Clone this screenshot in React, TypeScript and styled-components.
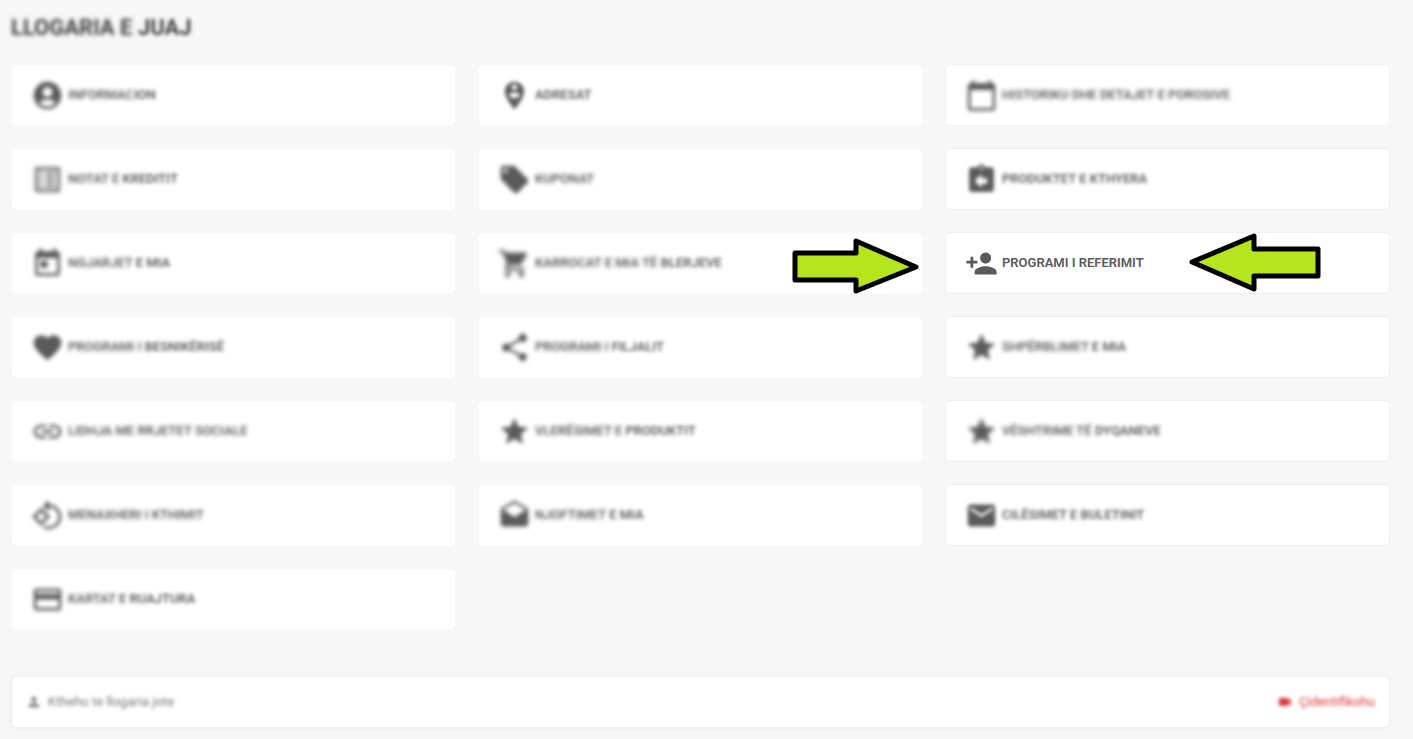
import React from "react";
import styled, { createGlobalStyle } from "styled-components";
import type { IconType } from "react-icons";
import {
  MdAccountCircle,
  MdAssignmentReturn,
  MdCalendarToday,
  MdCreditCard,
  MdDrafts,
  MdEmail,
  MdFavorite,
  MdLink,
  MdListAlt,
  MdLocalOffer,
  MdPerson,
  MdPersonAdd,
  MdPersonPinCircle,
  MdRotate90DegreesCcw,
  MdShare,
  MdShoppingCart,
  MdStar,
  MdToday,
  MdVideocam,
} from "react-icons/md";

const GlobalStyle = createGlobalStyle`
  * { box-sizing: border-box; }
  body {
    margin: 0;
    background: #f7f7f7;
    color: #5a5a5a;
    font-family: Roboto, "Liberation Sans", sans-serif;
  }
`;

type Softness = "none" | "light" | "medium" | "heavy";

const BLUR: Record<Softness, string> = {
  none: "none",
  light: "blur(1px) blur(1px) blur(1px)",
  medium: "blur(2px)",
  heavy: "blur(2px) blur(1px)",
};

const Page = styled.main`
  padding: 12px 23px 12px 11px;
`;

const Title = styled.h1`
  margin: 0 0 20px;
  font-size: 22px;
  line-height: 32px;
  font-weight: 700;
  color: #414141;
`;

const Blur = styled.span<{ $soft: Softness }>`
  filter: ${(p) => BLUR[p.$soft]};
`;

const Grid = styled.nav`
  display: grid;
  grid-template-columns: repeat(3, 1fr);
  gap: 22px;
`;

const Card = styled.a<{ $edge: string }>`
  position: relative;
  display: flex;
  align-items: center;
  gap: 4px;
  height: 62px;
  padding: 0 19px;
  border: 1px solid ${(p) => p.$edge};
  border-radius: 5px;
  background: #fff;
  background-clip: padding-box;
  color: #5a5a5a;
  text-decoration: none;
`;

const IconBox = styled(Blur)`
  display: flex;
  font-size: 33px;
`;

const Label = styled.span`
  font-size: 13px;
  line-height: 20px;
  font-weight: 600;
  white-space: pre;
`;

const ArrowSlot = styled.span<{ $side: "left" | "right" }>`
  position: absolute;
  top: 0;
  ${(p) => (p.$side === "right" ? "right: 2px;" : "left: 242px;")}
  display: flex;
`;

const Footer = styled.footer`
  display: flex;
  align-items: center;
  justify-content: space-between;
  height: 52px;
  margin-top: 46px;
  padding: 0 14px;
  border: 1px solid #efefef;
  border-radius: 5px;
  background: #fff;
  box-shadow: 0 0 3px #e6e6e6;
`;

const FooterLink = styled.a<{ $color: string }>`
  display: flex;
  align-items: center;
  gap: 6px;
  color: ${(p) => p.$color};
  font-size: 13px;
  line-height: 20px;
  text-decoration: none;
  filter: ${BLUR.light};
`;

function Arrow({ side }: { side: "left" | "right" }) {
  const points =
    side === "right"
      ? "3,20 64,20 64,8 124,34 64,58 64,47 3,47"
      : "4,29 66,3 66,16 130,16 130,43 66,43 66,56";
  return (
    <ArrowSlot $side={side}>
      <svg width="134" height="62" viewBox={side === "right" ? "-6 0 134 62" : "0 0 134 62"} aria-hidden="true">
        <polygon points={points} fill="#b5e61d" stroke="#000" strokeWidth="5" strokeLinejoin="round" />
      </svg>
    </ArrowSlot>
  );
}

type Item = {
  icon: IconType;
  faint?: string;
  clear?: string;
  iconSoft?: Softness;
  soft?: Softness;
  edge?: string;
  arrow?: "left" | "right";
};

const EDGE = "#efefef";
const PALE = "#f9f9f9";

const items: Item[] = [
  { icon: MdAccountCircle, faint: "INFORMAC", clear: "ION" },
  { icon: MdPersonPinCircle, clear: "ADRESAT", iconSoft: "light" },
  { icon: MdCalendarToday, faint: "HISTORIKU DHE DETAJET E POROSIVE", edge: "#f3f3f3" },
  { icon: MdListAlt, faint: "NOTAT E ", clear: "KREDITIT", iconSoft: "heavy" },
  { icon: MdLocalOffer, faint: "KUPONAT" },
  { icon: MdAssignmentReturn, clear: "PRODUKTET E KTHYERA", iconSoft: "light", edge: EDGE },
  { icon: MdToday, faint: "NGJARJET ", clear: "E MIA" },
  { icon: MdShoppingCart, faint: "KARROCAT E MIA TË ", clear: "BLERJEVE", iconSoft: "heavy", arrow: "right" },
  { icon: MdPersonAdd, clear: "PROGRAMI I REFERIMIT", iconSoft: "none", soft: "none", edge: EDGE, arrow: "left" },
  { icon: MdFavorite, faint: "PROGRAMI I ", clear: "BESNIKËRISË" },
  { icon: MdShare, faint: "PROGRAMI I ", clear: "FILJALIT" },
  { icon: MdStar, faint: "SHPËRBLIMET ", clear: "E MIA", edge: EDGE },
  { icon: MdLink, faint: "LIDHJA ", clear: "ME RRJETET SOCIALE", soft: "medium" },
  { icon: MdStar, faint: "VLERËSIMET E ", clear: "PRODUKTIT" },
  { icon: MdStar, faint: "VËSHTRIME TË ", clear: "DYQANEVE", iconSoft: "heavy", edge: EDGE },
  { icon: MdRotate90DegreesCcw, clear: "MENAXHERI I KTHIMIT", soft: "medium" },
  { icon: MdDrafts, faint: "NJOFTIMET ", clear: "E MIA" },
  { icon: MdEmail, clear: "CILËSIMET E BULETINIT", iconSoft: "light", edge: EDGE },
  { icon: MdCreditCard, faint: "KARTAT ", clear: "E RUAJTURA" },
];

export default function App() {
  return (
    <>
      <GlobalStyle />
      <Page>
        <Title>
          <Blur $soft="medium">LLOGARIA E </Blur>
          <Blur $soft="light">JUAJ</Blur>
        </Title>
        <Grid aria-label="Llogaria">
          {items.map(({ icon: Icon, faint, clear, iconSoft = "medium", soft = "light", edge = PALE, arrow }) => (
            <Card key={(faint ?? "") + (clear ?? "")} href="#" $edge={edge}>
              <IconBox $soft={iconSoft}>
                <Icon aria-hidden="true" />
              </IconBox>
              <Label>
                {faint && <Blur $soft="medium">{faint}</Blur>}
                {clear && <Blur $soft={soft}>{clear}</Blur>}
              </Label>
              {arrow && <Arrow side={arrow} />}
            </Card>
          ))}
        </Grid>
        <Footer>
          <FooterLink href="#" $color="#777">
            <MdPerson size={16} aria-hidden="true" />
            Kthehu te llogaria jote
          </FooterLink>
          <FooterLink href="#" $color="#d9363b">
            <MdVideocam size={16} aria-hidden="true" />
            Çidentifikohu
          </FooterLink>
        </Footer>
      </Page>
    </>
  );
}
